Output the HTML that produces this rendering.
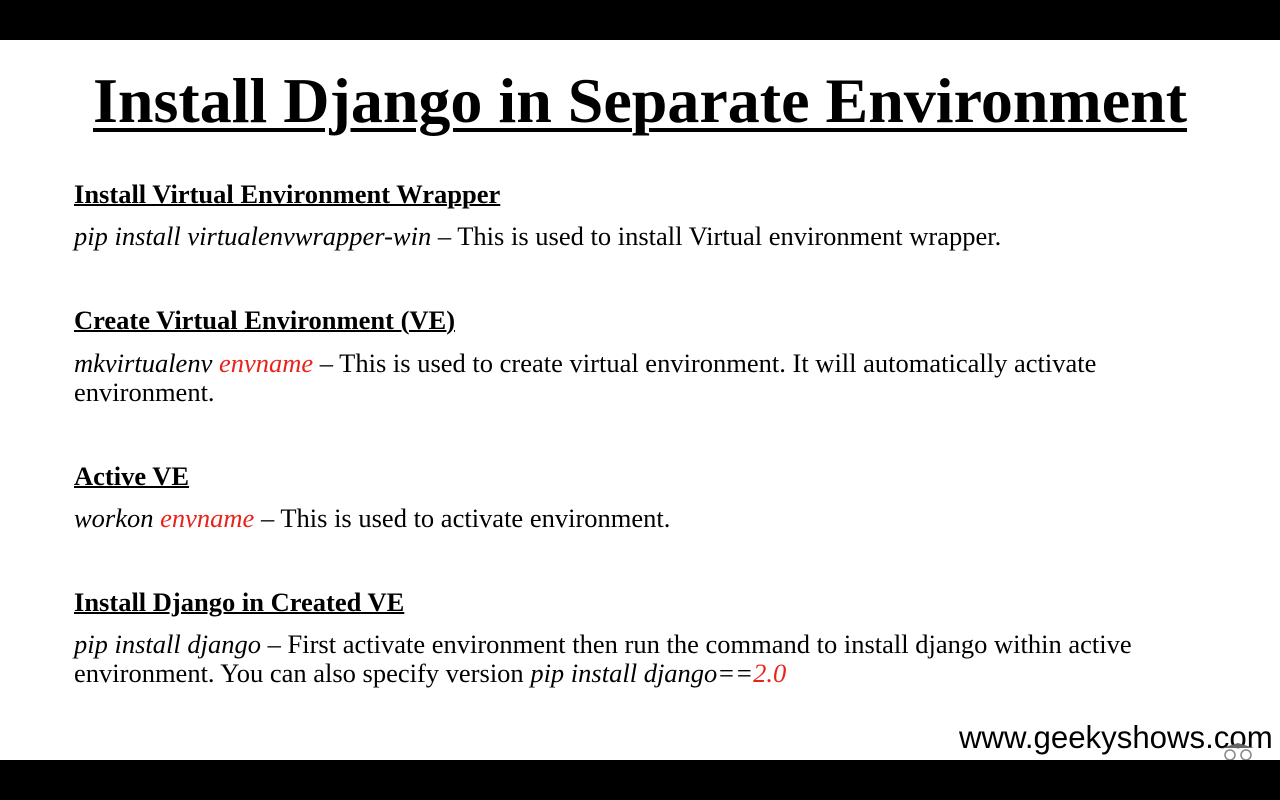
<!DOCTYPE html>
<html><head><meta charset="utf-8"><style>
html,body{margin:0;padding:0}
body{width:1280px;height:800px;background:#fff;position:relative;overflow:hidden;font-family:"Liberation Serif",serif;color:#000}
.bar{position:absolute;left:0;width:1280px;background:#000}
.l{position:absolute;white-space:nowrap;line-height:1}
.t{font-size:64px;font-weight:bold;left:93px;top:69px;text-decoration:underline;text-decoration-thickness:4px;text-underline-offset:6px}
.h{font-size:26.5px;font-weight:bold;left:74px;text-decoration:underline;text-decoration-thickness:2px}
.b{font-size:26.5px;left:74px}
i{font-style:italic}
.r{color:#e8231b}
.logo{position:absolute;left:959px;top:722px;font-family:"Liberation Sans",sans-serif;font-size:31.2px;line-height:1;white-space:nowrap}
</style></head><body>
<div class="bar" style="top:0;height:40px"></div>
<div class="l t">Install Django in Separate Environment</div>
<div class="l h" style="top:181px">Install Virtual Environment Wrapper</div>
<div class="l b" style="top:223px"><i>pip install virtualenvwrapper-win</i> – This is used to install Virtual environment wrapper.</div>
<div class="l h" style="top:307px">Create Virtual Environment (VE)</div>
<div class="l b" style="top:350px"><i>mkvirtualenv <span class="r">envname</span></i> – This is used to create virtual environment. It will automatically activate</div>
<div class="l b" style="top:379px">environment.</div>
<div class="l h" style="top:463px">Active VE</div>
<div class="l b" style="top:505px"><i>workon <span class="r">envname</span></i> – This is used to activate environment.</div>
<div class="l h" style="top:589px">Install Django in Created VE</div>
<div class="l b" style="top:631px"><i>pip install django</i> – First activate environment then run the command to install django within active</div>
<div class="l b" style="top:660px">environment. You can also specify version <i>pip install django==<span class="r">2.0</span></i></div>
<div class="logo">www.geekyshows.com</div>
<svg style="position:absolute;left:1216px;top:740px" width="44" height="22"><path d="M6 8 L22 3 L38 8 Z" fill="#666"/><circle cx="14" cy="15" r="5" fill="none" stroke="#888" stroke-width="1.5"/><circle cx="30" cy="15" r="5" fill="none" stroke="#888" stroke-width="1.5"/></svg>
<div class="bar" style="top:760px;height:40px"></div>
</body></html>
